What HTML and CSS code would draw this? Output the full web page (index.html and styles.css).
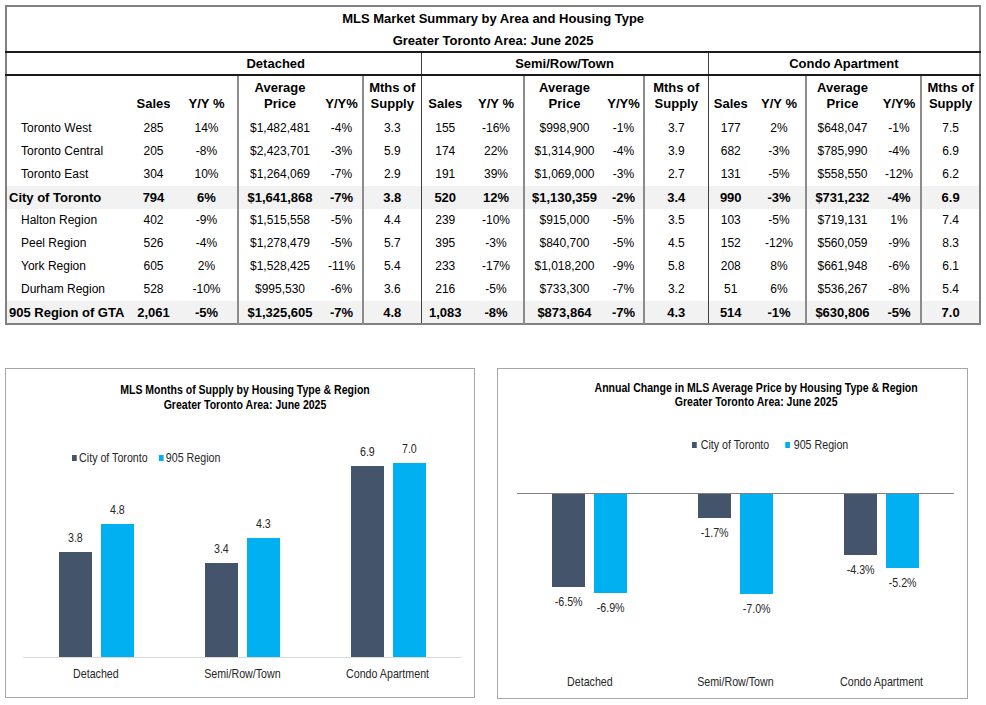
FILE: index.html
```html
<!DOCTYPE html>
<html lang="en">
<head>
<meta charset="utf-8">
<title>MLS Market Summary</title>
<link rel="stylesheet" href="styles.css">
</head>
<body>
<div class="page">
  <table class="summary">
    <colgroup>
      <col class="w125">
      <col class="w45"><col class="w62"><col class="w83"><col class="w42"><col class="w58">
      <col class="w48"><col class="w55"><col class="w80"><col class="w40"><col class="w64">
      <col class="w45"><col class="w53"><col class="w72"><col class="w43"><col class="w59">
    </colgroup>
    <tbody>
      <tr class="title1"><td colspan="16">MLS Market Summary by Area and Housing Type</td></tr>
      <tr class="title2"><td colspan="16">Greater Toronto Area: June 2025</td></tr>
      <tr class="groups">
        <td></td>
        <td colspan="5">Detached</td>
        <td colspan="5" class="gl">Semi/Row/Town</td>
        <td colspan="5" class="gl">Condo Apartment</td>
      </tr>
      <tr class="hdr">
        <th></th>
        <th>Sales</th><th>Y/Y %</th><th class="sl">Average<br>Price</th><th>Y/Y%</th><th class="sl">Mths of<br>Supply</th>
        <th class="gl">Sales</th><th>Y/Y %</th><th class="sl">Average<br>Price</th><th>Y/Y%</th><th class="sl">Mths of<br>Supply</th>
        <th class="gl">Sales</th><th>Y/Y %</th><th class="sl">Average<br>Price</th><th>Y/Y%</th><th class="sl">Mths of<br>Supply</th>
      </tr>
      <tr class="row">
        <td class="name">Toronto West</td>
        <td>285</td><td>14%</td><td class="sl">$1,482,481</td><td>-4%</td><td class="sl">3.3</td>
        <td class="gl">155</td><td>-16%</td><td class="sl">$998,900</td><td>-1%</td><td class="sl">3.7</td>
        <td class="gl">177</td><td>2%</td><td class="sl">$648,047</td><td>-1%</td><td class="sl">7.5</td>
      </tr>
      <tr class="row">
        <td class="name">Toronto Central</td>
        <td>205</td><td>-8%</td><td class="sl">$2,423,701</td><td>-3%</td><td class="sl">5.9</td>
        <td class="gl">174</td><td>22%</td><td class="sl">$1,314,900</td><td>-4%</td><td class="sl">3.9</td>
        <td class="gl">682</td><td>-3%</td><td class="sl">$785,990</td><td>-4%</td><td class="sl">6.9</td>
      </tr>
      <tr class="row">
        <td class="name">Toronto East</td>
        <td>304</td><td>10%</td><td class="sl">$1,264,069</td><td>-7%</td><td class="sl">2.9</td>
        <td class="gl">191</td><td>39%</td><td class="sl">$1,069,000</td><td>-3%</td><td class="sl">2.7</td>
        <td class="gl">131</td><td>-5%</td><td class="sl">$558,550</td><td>-12%</td><td class="sl">6.2</td>
      </tr>
      <tr class="row total">
        <td class="name">City of Toronto</td>
        <td>794</td><td>6%</td><td class="sl">$1,641,868</td><td>-7%</td><td class="sl">3.8</td>
        <td class="gl">520</td><td>12%</td><td class="sl">$1,130,359</td><td>-2%</td><td class="sl">3.4</td>
        <td class="gl">990</td><td>-3%</td><td class="sl">$731,232</td><td>-4%</td><td class="sl">6.9</td>
      </tr>
      <tr class="row">
        <td class="name">Halton Region</td>
        <td>402</td><td>-9%</td><td class="sl">$1,515,558</td><td>-5%</td><td class="sl">4.4</td>
        <td class="gl">239</td><td>-10%</td><td class="sl">$915,000</td><td>-5%</td><td class="sl">3.5</td>
        <td class="gl">103</td><td>-5%</td><td class="sl">$719,131</td><td>1%</td><td class="sl">7.4</td>
      </tr>
      <tr class="row">
        <td class="name">Peel Region</td>
        <td>526</td><td>-4%</td><td class="sl">$1,278,479</td><td>-5%</td><td class="sl">5.7</td>
        <td class="gl">395</td><td>-3%</td><td class="sl">$840,700</td><td>-5%</td><td class="sl">4.5</td>
        <td class="gl">152</td><td>-12%</td><td class="sl">$560,059</td><td>-9%</td><td class="sl">8.3</td>
      </tr>
      <tr class="row">
        <td class="name">York Region</td>
        <td>605</td><td>2%</td><td class="sl">$1,528,425</td><td>-11%</td><td class="sl">5.4</td>
        <td class="gl">233</td><td>-17%</td><td class="sl">$1,018,200</td><td>-9%</td><td class="sl">5.8</td>
        <td class="gl">208</td><td>8%</td><td class="sl">$661,948</td><td>-6%</td><td class="sl">6.1</td>
      </tr>
      <tr class="row">
        <td class="name">Durham Region</td>
        <td>528</td><td>-10%</td><td class="sl">$995,530</td><td>-6%</td><td class="sl">3.6</td>
        <td class="gl">216</td><td>-5%</td><td class="sl">$733,300</td><td>-7%</td><td class="sl">3.2</td>
        <td class="gl">51</td><td>6%</td><td class="sl">$536,267</td><td>-8%</td><td class="sl">5.4</td>
      </tr>
      <tr class="row total">
        <td class="name">905 Region of GTA</td>
        <td>2,061</td><td>-5%</td><td class="sl">$1,325,605</td><td>-7%</td><td class="sl">4.8</td>
        <td class="gl">1,083</td><td>-8%</td><td class="sl">$873,864</td><td>-7%</td><td class="sl">4.3</td>
        <td class="gl">514</td><td>-1%</td><td class="sl">$630,806</td><td>-5%</td><td class="sl">7.0</td>
      </tr>
    </tbody>
  </table>

  <div class="charts">
    <section class="chart chart-supply">
      <div class="chart-title"><span class="nt">MLS Months of Supply by Housing Type &amp; Region<br>Greater Toronto Area: June 2025</span></div>
      <div class="legend">
        <div class="legend-in">
          <span class="key"><i class="sw dark"></i>City of Toronto</span>
          <span class="key"><i class="sw blue"></i>905 Region</span>
        </div>
      </div>
      <div class="plot up">
        <div class="grp">
          <div class="bc"><span class="val">3.8</span><div class="bar dark" style="height:105px"></div></div>
          <div class="bc"><span class="val">4.8</span><div class="bar blue" style="height:133px"></div></div>
        </div>
        <div class="grp">
          <div class="bc"><span class="val">3.4</span><div class="bar dark" style="height:94px"></div></div>
          <div class="bc"><span class="val">4.3</span><div class="bar blue" style="height:119px"></div></div>
        </div>
        <div class="grp">
          <div class="bc"><span class="val">6.9</span><div class="bar dark" style="height:191px"></div></div>
          <div class="bc"><span class="val">7.0</span><div class="bar blue" style="height:194px"></div></div>
        </div>
      </div>
      <div class="cats">
        <div class="cat"><span>Detached</span></div>
        <div class="cat"><span>Semi/Row/Town</span></div>
        <div class="cat"><span>Condo Apartment</span></div>
      </div>
    </section>

    <section class="chart chart-price">
      <div class="chart-title"><span class="nt">Annual Change in MLS Average Price by Housing Type &amp; Region<br>Greater Toronto Area: June 2025</span></div>
      <div class="legend">
        <div class="legend-in">
          <span class="key"><i class="sw dark"></i>City of Toronto</span>
          <span class="key"><i class="sw blue"></i>905 Region</span>
        </div>
      </div>
      <div class="plot down">
        <div class="grp">
          <div class="bc"><div class="bar dark" style="height:93px"></div><span class="val">-6.5%</span></div>
          <div class="bc"><div class="bar blue" style="height:99px"></div><span class="val">-6.9%</span></div>
        </div>
        <div class="grp">
          <div class="bc"><div class="bar dark" style="height:24px"></div><span class="val">-1.7%</span></div>
          <div class="bc"><div class="bar blue" style="height:100px"></div><span class="val">-7.0%</span></div>
        </div>
        <div class="grp">
          <div class="bc"><div class="bar dark" style="height:61px"></div><span class="val">-4.3%</span></div>
          <div class="bc"><div class="bar blue" style="height:74px"></div><span class="val">-5.2%</span></div>
        </div>
      </div>
      <div class="cats">
        <div class="cat"><span>Detached</span></div>
        <div class="cat"><span>Semi/Row/Town</span></div>
        <div class="cat"><span>Condo Apartment</span></div>
      </div>
    </section>
  </div>
</div>
</body>
</html>
```

FILE: styles.css
```css
html, body {
  margin: 0;
  padding: 0;
  background: #ffffff;
}

body {
  font-family: "Liberation Sans", Arial, sans-serif;
  color: #000000;
}

.page {
  padding: 5px 0 0 5px;
}

/* ---------- Summary table ---------- */
.summary {
  border-collapse: collapse;
  table-layout: fixed;
  width: 974px;
  border: 2px solid #808080;
}

.w125 { width: 125px; }
.w40 { width: 40px; }
.w42 { width: 42px; }
.w43 { width: 43px; }
.w45 { width: 45px; }
.w48 { width: 48px; }
.w53 { width: 53px; }
.w55 { width: 55px; }
.w58 { width: 58px; }
.w59 { width: 59px; }
.w62 { width: 62px; }
.w64 { width: 64px; }
.w72 { width: 72px; }
.w80 { width: 80px; }
.w83 { width: 83px; }

.summary td,
.summary th {
  padding: 0;
  text-align: center;
  white-space: nowrap;
  font-size: 12px;
  line-height: 15px;
}

.summary .title1 td,
.summary .title2 td {
  font-weight: bold;
  font-size: 13px;
  height: 22px;
}

.summary .title2 td {
  border-bottom: 2px solid #1a1a1a;
}

.summary .groups td {
  font-weight: bold;
  font-size: 13px;
  height: 21px;
  border-bottom: 2px solid #1a1a1a;
}

.summary .hdr {
  height: 42px;
}

.summary .hdr th {
  font-weight: bold;
  font-size: 13px;
  line-height: 16px;
  vertical-align: bottom;
  padding-bottom: 5px;
}

.summary .row {
  height: 23px;
}

.summary .name {
  text-align: left;
  padding-left: 14px;
}

.summary .total td {
  background: #f2f2f2;
  font-weight: bold;
  font-size: 13px;
}

.summary .total .name {
  padding-left: 2px;
}

.summary .gl {
  border-left: 1px solid #404040;
}

.summary .sl {
  border-left: 2px solid #8c8c8c;
}

/* ---------- Charts ---------- */
.charts {
  display: flex;
  gap: 22px;
  margin-top: 43px;
}

.chart {
  box-sizing: border-box;
  border: 1px solid #a6a6a6;
  display: flex;
  flex-direction: column;
  font-family: "Liberation Sans", Arial, sans-serif;
  color: #262626;
}

.chart-supply {
  width: 470px;
  height: 330px;
}

.chart-price {
  width: 471px;
  height: 331px;
}

.chart-title {
  font-weight: bold;
  font-size: 13.5px;
  line-height: 15px;
  text-align: center;
  color: #000000;
  padding-top: 13px;
}

/* narrow (Arial Narrow look) text */
.nt {
  display: inline-block;
  white-space: nowrap;
  transform: scaleX(0.78);
}

.chart-supply .chart-title {
  padding-left: 10px;
}

.chart-price .chart-title {
  padding-left: 47px;
  padding-top: 12px;
  line-height: 14px;
}

.legend {
  font-size: 13.5px;
  line-height: 15px;
}

.legend-in {
  display: flex;
  transform: scaleX(0.79);
  transform-origin: left center;
  white-space: nowrap;
}

.chart-supply .legend {
  margin-top: 38px;
  padding-left: 66px;
}

.chart-supply .legend-in {
  gap: 14px;
}

.chart-price .legend {
  margin-top: 28px;
  padding-left: 194px;
}

.chart-price .legend-in {
  gap: 20px;
}

.key {
  display: flex;
  align-items: center;
  gap: 3px;
}

.chart-price .key {
  gap: 5px;
}

.sw {
  display: block;
  width: 6px;
  height: 6px;
  margin-top: 1px;
}

.dark { background: #44546a; }
.blue { background: #00b0f0; }

.plot {
  display: flex;
}

.grp {
  flex: 1;
  display: flex;
  justify-content: center;
  gap: 9px;
}

.bc {
  width: 33px;
  display: flex;
  flex-direction: column;
  align-items: center;
}

.bar {
  width: 33px;
}

.val {
  font-size: 13.5px;
  line-height: 15px;
  white-space: nowrap;
  transform: scaleX(0.79);
}

.plot.up {
  height: 192px;
  margin: 0 13px 0 17px;
  border-bottom: 1px solid #d9d9d9;
}

.plot.up .grp {
  align-items: flex-end;
}

.plot.up .val {
  margin-bottom: 7px;
}

.plot.down {
  height: 172px;
  margin: 41px 13px 0 19px;
  border-top: 1px solid #808080;
}

.plot.down .grp {
  align-items: flex-start;
}

.plot.down .val {
  margin-top: 7px;
}

.cats {
  display: flex;
  font-size: 13.5px;
  line-height: 15px;
}

.cat {
  flex: 1;
  text-align: center;
  white-space: nowrap;
}

.cat span {
  display: inline-block;
  transform: scaleX(0.79);
}

.chart-supply .cats {
  margin: 8px 13px 0 17px;
}

.chart-price .cats {
  margin: 8px 13px 0 19px;
}
```
